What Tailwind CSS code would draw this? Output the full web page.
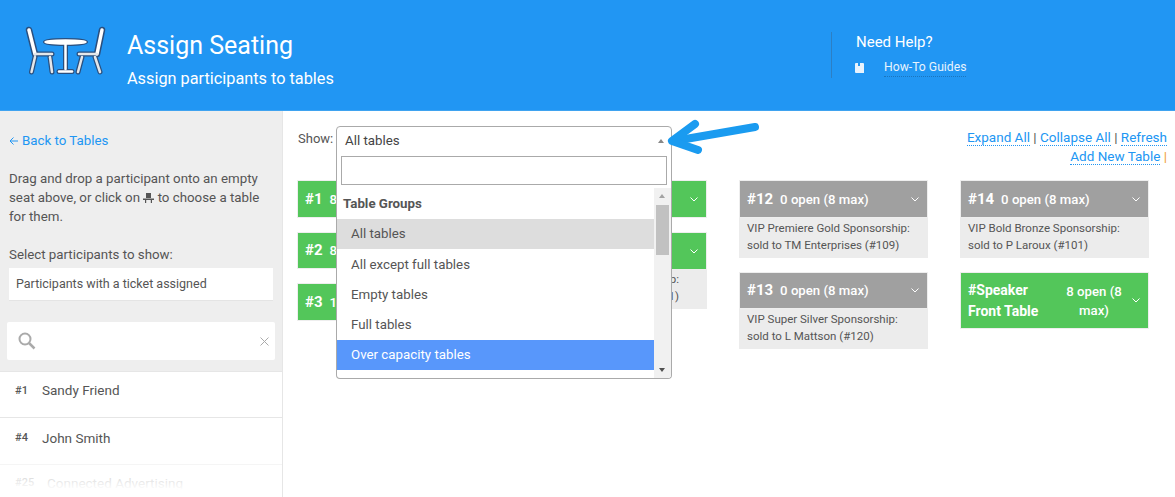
<!DOCTYPE html>
<html lang="en">
<head>
    <meta charset="UTF-8">
    <title>Assign Seating</title>
    <script src="https://cdn.jsdelivr.net/npm/@tailwindcss/browser@4"></script>
</head>
<body class="h-screen overflow-hidden bg-white font-['Roboto',sans-serif] text-[#555]">

    <!-- header -->
    <header class="h-[111px] bg-[#2196f3] flex text-white border-b border-[#3fa3f0]">
        <div class="w-[831px] flex">
            <svg class="ml-[25px] mt-[26px] w-[81px] h-[49px]" viewBox="0 0 81 49" fill="none">
                <g stroke="#2a4f7e" stroke-linecap="round" stroke-linejoin="round">
                    <g stroke-width="6.5"><path d="M4 4 L10 28"/><path d="M77 4 L72 28"/></g>
                    <g stroke-width="5">
                        <path d="M10 28 H27"/><path d="M10 31 L6.500 46"/><path d="M25 31 L27 46"/>
                        <path d="M54 28 H72"/><path d="M57 31 L53 46"/><path d="M70 31 L75 46"/>
                        <ellipse cx="40.500" cy="16" rx="20" ry="1.500"/><path d="M40.500 18 V43"/><path d="M34 45.500 H47"/>
                    </g>
                </g>
                <g stroke-linecap="round" stroke-linejoin="round">
                    <g stroke="#fff" stroke-width="3.500"><path d="M4 4 L10 28"/><path d="M77 4 L72 28"/></g>
                    <g stroke="#e4e7ea" stroke-width="2.500">
                        <path d="M10 28 H27"/><path d="M54 28 H72"/><path d="M10 31 L6.500 46"/><path d="M25 31 L27 46"/><path d="M57 31 L53 46"/><path d="M70 31 L75 46"/>
                    </g>
                    <g stroke="#fff" stroke-width="2.500">
                        <ellipse cx="40.500" cy="16" rx="20" ry="1.500" fill="#fff"/><path d="M40.500 18 V43"/><path d="M34 45.500 H47"/>
                    </g>
                </g>
            </svg>
            <div class="ml-[21px] pt-[31px]">
                <h1 class="text-[25px] leading-[30px]">Assign Seating</h1>
                <p class="mt-[8px] text-[16.300px] leading-[20px]">Assign participants to tables</p>
            </div>
        </div>
        <div class="mt-[32px] h-[46px] border-l border-[#2c7fc4] pl-[24px]">
            <p class="text-[15px] leading-[20px]">Need Help?</p>
            <div class="flex items-center mt-[6px] -ml-[1px] text-[12.200px] text-[#e8f3fd]">
                <svg class="w-[9px] h-[10px]" viewBox="0 0 9 10"><path d="M0 1 Q0 0 1 0 H8 Q9 0 9 1 V10 H1 Q0 10 0 9 Z" fill="#e8f3fd"/><path d="M3 0 H5 V3 H3 Z" fill="#2196f3"/></svg>
                <a class="ml-[20px] leading-[18px] border-b border-dotted border-[#1b75bd]">How-To Guides</a>
            </div>
        </div>
    </header>

    <div class="flex h-[386px] relative">
        <!-- sidebar -->
        <aside class="w-[283px] shrink-0 border-r border-[#e6e6e6] relative overflow-hidden">
            <div class="bg-[#eeeeee] h-[260px] pt-[21px] pl-[9px] pr-[9px] text-[13.300px]">
                <a class="flex items-center text-[#2196f3] leading-[18px]">
                    <svg class="w-[10px] h-[10px] mr-[3px]" viewBox="0 0 10 10" fill="none" stroke="#2196f3" stroke-width="1"><path d="M9 5 H1 M4.500 1.500 L1 5 L4.500 8.500"/></svg>
                    Back to Tables
                </a>
                <p class="mt-[19px] leading-[19px]">Drag and drop a participant onto an empty seat above, or click on
                    <svg class="inline w-[11px] h-[10px] align-[-1px]" viewBox="0 0 11 10"><path d="M3 0 H8 V5 H3 Z M0 5.500 H11 V7 H0 Z M2 7 H3.200 V10 H2 Z M7.800 7 H9 V10 H7.800 Z" fill="#555"/></svg>
                    to choose a table for them.</p>
                <p class="mt-[19px] leading-[19px]">Select participants to show:</p>
                <div class="mt-[4px] h-[33px] w-[264px] bg-white border-b border-[#e4e4e4] pl-[7px] text-[12.500px] leading-[32px] text-[#555]">Participants with a ticket assigned</div>
                <div class="-ml-[2px] mt-[21px] h-[38px] w-[268px] bg-white rounded-[2px] flex items-center justify-between pl-[11px] pr-[6px]">
                    <svg class="w-[18px] h-[18px]" viewBox="0 0 18 18" fill="none" stroke="#aaa" stroke-width="2"><circle cx="7" cy="7" r="5.500"/><path d="M11 11 L16.500 16.500" stroke-width="2.500"/></svg>
                    <svg class="w-[9px] h-[9px]" viewBox="0 0 9 9" fill="none" stroke="#aaa" stroke-width="1"><path d="M0.500 0.500 L8.500 8.500 M8.500 0.500 L0.500 8.500"/></svg>
                </div>
            </div>
            <ul class="text-[13.500px]">
                <li class="h-[47px] border-t border-b border-[#e6e6e6] flex items-start pt-[9px] leading-[18px]">
                    <span class="w-[42px] pl-[15px] text-[11px] font-medium leading-[20px]">#1</span><span>Sandy Friend</span>
                </li>
                <li class="h-[47px] border-b border-[#e6e6e6] flex items-start pt-[11px] leading-[18px]">
                    <span class="w-[42px] pl-[15px] text-[11px] font-medium">#4</span><span>John Smith</span>
                </li>
                <li class="h-[47px] flex items-start pt-[9px] leading-[18px]">
                    <span class="w-[47px] pl-[15px] text-[11px] font-medium">#25</span><span>Connected Advertising</span>
                </li>
            </ul>
            <div class="absolute left-0 right-0 bottom-[7px] h-[38px] bg-gradient-to-b from-white/40 to-white"></div>
            <div class="absolute left-0 right-0 bottom-0 h-[7px] bg-white"></div>
        </aside>

        <!-- main -->
        <main class="flex-1 pl-[15px] pr-[8px] pt-[15px] relative">
            <div class="flex justify-between h-[54px]">
                <div class="flex items-start">
                    <span class="w-[38px] shrink-0 text-[13px] leading-[25px]">Show:</span>
                    <div class="w-[336px] h-[28px] border border-[#aaa] rounded-t-[4px] pl-[8px] pr-[7px] pt-[1px] flex items-center justify-between text-[13.300px] text-[#444]">
                        All tables
                        <span class="w-0 h-0 border-x-[3.500px] border-x-transparent border-b-[4px] border-b-[#888]"></span>
                    </div>
                </div>
                <div class="text-right text-[13.500px] leading-[20px] text-[#555] pt-[1px]">
                    <div><a class="text-[#2196f3] border-b border-dotted border-[#2196f3]">Expand All</a> | <a class="text-[#2196f3] border-b border-dotted border-[#2196f3]">Collapse All</a> | <a class="text-[#2196f3] border-b border-dotted border-[#2196f3]">Refresh</a></div>
                    <div class="-mt-[1px]"><a class="text-[#2196f3] border-b border-dotted border-[#2196f3]">Add New Table</a> <span class="text-[#f0a030]">|</span></div>
                </div>
            </div>

            <div class="flex gap-x-[32px] -ml-[1px]">
                <div class="w-[189px] flex flex-col gap-[14px]">
                    <div class="h-[38px] border border-[#eeeeee] bg-[#53c65a] flex items-center justify-between pl-[7px] pr-[8px] text-white text-[13.200px] font-medium"><span><b class="text-[15px] font-bold mr-[7px]">#1</b>8 open (8 max)</span><svg class="w-[8px] h-[5px]" viewBox="0 0 8 5" fill="none" stroke="#fff"><path d="M0.500 0.500 L4 4 L7.500 0.500"/></svg></div>
                    <div class="h-[37px] border border-[#eeeeee] bg-[#53c65a] flex items-center justify-between pl-[7px] pr-[8px] text-white text-[13.200px] font-medium"><span><b class="text-[15px] font-bold mr-[7px]">#2</b>8 open (8 max)</span><svg class="w-[8px] h-[5px]" viewBox="0 0 8 5" fill="none" stroke="#fff"><path d="M0.500 0.500 L4 4 L7.500 0.500"/></svg></div>
                    <div class="h-[38px] border border-[#eeeeee] bg-[#53c65a] flex items-center justify-between pl-[7px] pr-[8px] text-white text-[13.200px] font-medium"><span><b class="text-[15px] font-bold mr-[7px]">#3</b>1 open (8 max)</span><svg class="w-[8px] h-[5px]" viewBox="0 0 8 5" fill="none" stroke="#fff"><path d="M0.500 0.500 L4 4 L7.500 0.500"/></svg></div>
                </div>
                <div class="w-[189px] flex flex-col gap-[14px]">
                    <div class="h-[38px] border border-[#eeeeee] bg-[#53c65a] flex items-center justify-between pl-[7px] pr-[8px] text-white text-[13.200px] font-medium"><span><b class="text-[15px] font-bold mr-[7px]">#10</b>8 open (8 max)</span><svg class="w-[8px] h-[5px]" viewBox="0 0 8 5" fill="none" stroke="#fff"><path d="M0.500 0.500 L4 4 L7.500 0.500"/></svg></div>
                    <div>
                        <div class="h-[38px] border border-[#eeeeee] bg-[#53c65a] flex items-center justify-between pl-[7px] pr-[8px] text-white text-[13.200px] font-medium"><span><b class="text-[15px] font-bold mr-[7px]">#11</b>4 open (8 max)</span><svg class="w-[8px] h-[5px]" viewBox="0 0 8 5" fill="none" stroke="#fff"><path d="M0.500 0.500 L4 4 L7.500 0.500"/></svg></div>
                        <div class="h-[39px] bg-[#ececec] pl-[8px] pr-[28px] pt-[1px] text-[11.500px] leading-[17px] text-right">sponsorship:<br>sold (#111)</div>
                    </div>
                </div>
                <div class="w-[189px] flex flex-col gap-[14px]">
                    <div>
                        <div class="h-[38px] border border-[#eeeeee] bg-[#a0a0a0] flex items-center justify-between pl-[7px] pr-[8px] text-white text-[13.200px] font-medium"><span><b class="text-[15px] font-bold mr-[7px]">#12</b>0 open (8 max)</span><svg class="w-[8px] h-[5px]" viewBox="0 0 8 5" fill="none" stroke="#fff"><path d="M0.500 0.500 L4 4 L7.500 0.500"/></svg></div>
                        <div class="h-[40px] bg-[#ececec] px-[8px] pt-[2px] text-[11.500px] leading-[17px]">VIP Premiere Gold Sponsorship:<br>sold to TM Enterprises (#109)</div>
                    </div>
                    <div>
                        <div class="h-[37px] border border-[#eeeeee] bg-[#a0a0a0] flex items-center justify-between pl-[7px] pr-[8px] text-white text-[13.200px] font-medium"><span><b class="text-[15px] font-bold mr-[7px]">#13</b>0 open (8 max)</span><svg class="w-[8px] h-[5px]" viewBox="0 0 8 5" fill="none" stroke="#fff"><path d="M0.500 0.500 L4 4 L7.500 0.500"/></svg></div>
                        <div class="h-[40px] bg-[#ececec] px-[8px] pt-[2px] text-[11.500px] leading-[17px]">VIP Super Silver Sponsorship:<br>sold to L Mattson (#120)</div>
                    </div>
                </div>
                <div class="w-[189px] flex flex-col gap-[14px]">
                    <div>
                        <div class="h-[38px] border border-[#eeeeee] bg-[#a0a0a0] flex items-center justify-between pl-[7px] pr-[8px] text-white text-[13.200px] font-medium"><span><b class="text-[15px] font-bold mr-[7px]">#14</b>0 open (8 max)</span><svg class="w-[8px] h-[5px]" viewBox="0 0 8 5" fill="none" stroke="#fff"><path d="M0.500 0.500 L4 4 L7.500 0.500"/></svg></div>
                        <div class="h-[40px] bg-[#ececec] px-[8px] pt-[2px] text-[11.500px] leading-[17px]">VIP Bold Bronze Sponsorship:<br>sold to P Laroux (#101)</div>
                    </div>
                    <div class="h-[57px] border border-[#eeeeee] bg-[#53c65a] flex items-center pl-[7px] text-white text-[13.200px] font-medium">
                        <b class="text-[14px] font-bold leading-[21px] w-[92px] shrink-0">#Speaker Front Table</b>
                        <span class="w-[68px] text-center leading-[19px]">8 open (8 max)</span>
                        <svg class="ml-[4px] w-[8px] h-[5px]" viewBox="0 0 8 5" fill="none" stroke="#fff"><path d="M0.500 0.500 L4 4 L7.500 0.500"/></svg>
                    </div>
                </div>
            </div>

            <!-- open dropdown -->
            <div class="absolute left-[53px] top-[42px] w-[336px] h-[226px] bg-white border border-t-0 border-[#aaa] rounded-b-[4px] overflow-hidden">
                <div class="px-[4px] pt-[3px]"><div class="h-[29px] border border-[#aaa]"></div></div>
                <div class="absolute left-0 right-0 top-[35px] bottom-0 flex">
                    <ul class="w-[317px] text-[13.300px]">
                        <li class="h-[31px] pl-[6px] font-bold leading-[31px] text-[#555]">Table Groups</li>
                        <li class="h-[30px] pl-[14px] leading-[30px] bg-[#dddddd]">All tables</li>
                        <li class="h-[31px] pl-[14px] leading-[31px]">All except full tables</li>
                        <li class="h-[30px] pl-[14px] leading-[30px]">Empty tables</li>
                        <li class="h-[30px] pl-[14px] leading-[30px]">Full tables</li>
                        <li class="h-[30px] pl-[14px] leading-[30px] bg-[#5897fb] text-white">Over capacity tables</li>
                    </ul>
                    <div class="w-[17px] bg-[#f1f1f1] relative">
                        <span class="absolute left-[5px] top-[6px] w-0 h-0 border-x-[3.500px] border-x-transparent border-b-[4px] border-b-[#a3a3a3]"></span>
                        <div class="absolute left-[2px] w-[13px] top-[17px] h-[50px] bg-[#c1c1c1]"></div>
                        <span class="absolute left-[5px] bottom-[6px] w-0 h-0 border-x-[3.500px] border-x-transparent border-t-[4px] border-t-[#505050]"></span>
                    </div>
                </div>
            </div>

            <!-- annotation arrow -->
            <svg class="absolute left-[382px] top-[3px] w-[100px] h-[46px]" viewBox="0 0 100 46" fill="none" stroke="#1a9bf0" stroke-width="8" stroke-linecap="round" stroke-linejoin="round">
                <path d="M90 13 L9 27"/><path d="M30 10 L7 27 L33 36"/>
            </svg>
        </main>
    </div>
</body>
</html>
